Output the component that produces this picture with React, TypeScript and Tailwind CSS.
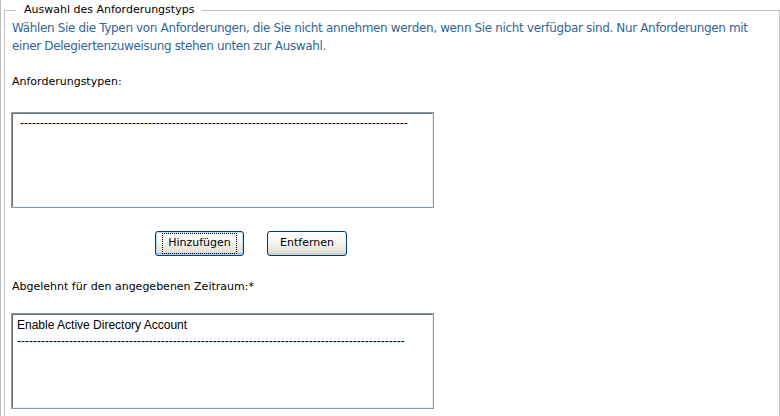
const dashes = "-".repeat(97);

const ListBox = ({ lines, offset }: { lines: string[]; offset?: boolean }) => {
  return (
    <div className="w-[423px] h-[96px] border border-[#7f9db9] bg-white">
      <div
        className={`h-full border-t border-l border-[#716f64] border-r border-b border-r-[#f1efe2] border-b-[#f1efe2] ${
          offset ? "pt-[1px]" : "pt-[2px]"
        } font-['Liberation_Sans',Arial,sans-serif] text-[12px] leading-[16px] text-black`}
      >
        {lines.map((l, i) => (
          <div key={i} className={offset ? "pl-[7px] whitespace-nowrap" : "pl-[4px] whitespace-nowrap"}>
            {l}
          </div>
        ))}
      </div>
    </div>
  );
};

const XpButton = ({ label, focused, width }: { label: string; focused?: boolean; width: string }) => {
  return (
    <button
      className={`${width} h-[25px] rounded-[3px] border border-[#003c74] bg-gradient-to-b from-[#ffffff] via-[#f4f3ee] to-[#dcd9cd] text-black text-[11px] ${
        focused ? "shadow-[inset_0_0_0_1px_#c2d4f6,inset_0_-2px_0_0_#8fb0e9]" : "shadow-[inset_0_-2px_0_0_#d6d0c0]"
      } px-[6px] pt-[1px] pb-[1px] flex`}
    >
      <span
        className={`flex-1 flex items-center justify-center border border-dotted ${
          focused ? "border-black" : "border-transparent"
        }`}
      >
        {label}
      </span>
    </button>
  );
};

export default function App() {
  return (
    <div className="w-[780px] h-[416px] overflow-hidden bg-white border-l border-[#bdbdbd] font-['DejaVu_Sans',Tahoma,sans-serif] text-[11px] text-black">
      <fieldset className="ml-[3px] mt-[3px] h-[500px] border border-[#c0c0c0] p-0">
        <legend className="ml-[11px] px-[8px] leading-[14px]">Auswahl des Anforderungstyps</legend>
        <div className="pl-[7px] pt-[2px]">
          <p className="text-[#336699] text-[12px] leading-[18px] tracking-[-0.35px] pr-[4px]">
            Wählen Sie die Typen von Anforderungen, die Sie nicht annehmen werden, wenn Sie nicht verfügbar sind. Nur
            Anforderungen mit einer Delegiertenzuweisung stehen unten zur Auswahl.
          </p>
          <p className="mt-[18px] leading-[18px]">Anforderungstypen:</p>
          <div className="mt-[21px] ml-[-1px]">
            <ListBox lines={[dashes]} offset />
          </div>
          <div className="mt-[23px] ml-[143px] flex gap-[23px]">
            <XpButton label="Hinzufügen" focused width="w-[89px]" />
            <XpButton label="Entfernen" width="w-[80px]" />
          </div>
          <p className="mt-[22px] leading-[18px]">Abgelehnt für den angegebenen Zeitraum:*</p>
          <div className="mt-[17px] ml-[-1px]">
            <ListBox lines={["Enable Active Directory Account", dashes]} />
          </div>
        </div>
      </fieldset>
    </div>
  );
}
